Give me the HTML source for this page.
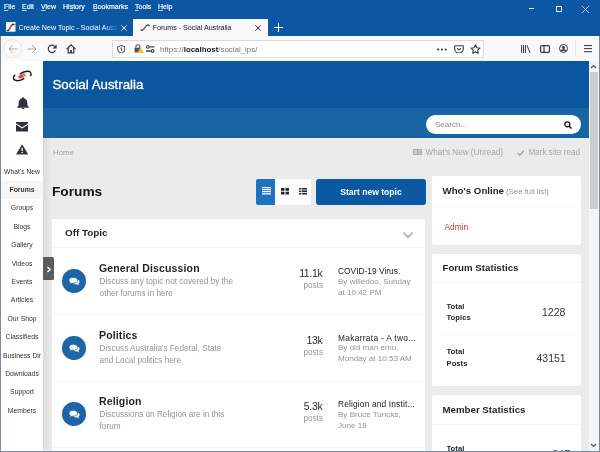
<!DOCTYPE html>
<html><head><meta charset="utf-8">
<style>
*{margin:0;padding:0;box-sizing:border-box}
html,body{width:600px;height:452px;overflow:hidden;background:#7a8a99;font-family:"Liberation Sans",sans-serif}
.a{position:absolute;white-space:nowrap}
.m{color:#fff;font-size:7px;top:2.5px;-webkit-text-stroke:0.15px #fff}
.m u{text-decoration-thickness:0.6px;text-underline-offset:1px;text-decoration-color:rgba(255,255,255,0.75)}
.tabtxt{font-size:7.1px;color:#fff}
#titlebar{position:absolute;left:0;top:0;width:600px;height:36px;background:#0b57a4}
#toolbar{position:absolute;left:1px;top:36px;width:598px;height:25px;background:#f9f9fb}
#url{position:absolute;left:112px;top:40px;width:372px;height:17.5px;background:#fff;border:1px solid #dcdcde;border-radius:1px}
#page{position:absolute;left:1px;top:61px;width:598px;height:390px;background:#ebebeb;overflow:hidden}
#side{position:absolute;left:0;top:0;width:42px;height:390px;background:#fff}
.sl{position:absolute;left:0;width:42px;text-align:center;font-size:6.8px;color:#333}
#hdr{position:absolute;left:42px;top:0;width:546px;height:47px;background:#0b579f}
#nav{position:absolute;left:42px;top:47px;width:546px;height:30px;background:#1765a3}
#scroll{position:absolute;left:588px;top:0;width:10px;height:390px;background:#f4f4f4}
.card{position:absolute;background:#fff;border-radius:2px}
.sep{position:absolute;height:1px;background:#f4f4f5}
.ft{font-size:10.5px;font-weight:bold;color:#1f2125;letter-spacing:0.15px}
.fd{font-size:8.2px;color:#8f949b;line-height:12.2px}
.num{font-size:10.5px;color:#2b2d30;text-align:right;letter-spacing:-0.35px}
.posts{font-size:8.2px;color:#8f949b;text-align:right}
.lt{font-size:8.4px;color:#222}
.lb{font-size:8.05px;color:#8f949b;line-height:11.3px}
.wt{font-size:10px;font-weight:bold;color:#1f2125}
</style></head><body><div style="position:absolute;left:0;top:0;width:600px;height:452px;will-change:transform">
<div id="titlebar"></div>
<div class="a m" style="left:4px"><u>F</u>ile</div>
<div class="a m" style="left:22px"><u>E</u>dit</div>
<div class="a m" style="left:41px"><u>V</u>iew</div>
<div class="a m" style="left:63px">Hi<u>s</u>tory</div>
<div class="a m" style="left:93px"><u>B</u>ookmarks</div>
<div class="a m" style="left:135px"><u>T</u>ools</div>
<div class="a m" style="left:158px"><u>H</u>elp</div>
<!-- tabs -->
<svg class="a" style="left:6px;top:22.3px" width="9.5" height="9.7" viewBox="0 0 9.5 9.7"><rect width="9.5" height="9.7" fill="#f4f8fb"/><path d="M1 8.3C2.3 9 3.3 7.8 4.3 5.6C5.3 3.4 6.6 1.6 8.6 2.6" stroke="#5a3328" stroke-width="1.5" fill="none"/><path d="M3.2 7.4C3.8 6.5 4.5 4.6 5.5 3.4" stroke="#d07a68" stroke-width="1.2" fill="none"/></svg>
<div class="a tabtxt" style="left:18.6px;top:23.5px;width:99px;overflow:hidden;-webkit-mask-image:linear-gradient(90deg,#000 85%,transparent)">Create New Topic - Social Australia</div>
<svg class="a" style="left:121px;top:24.5px" width="6" height="6" viewBox="0 0 6 6"><path d="M0.3 0.3L5.7 5.7M5.7 0.3L0.3 5.7" stroke="#fff" stroke-width="0.85"/></svg>
<div class="a" style="left:133px;top:19px;width:135px;height:18px;background:#f9f9fb"></div>
<svg class="a" style="left:140px;top:24px" width="10" height="7" viewBox="0 0 10 7"><path d="M0.6 5.6C1.6 6.8 3 6.3 4.3 4.3C5.6 2.3 7 0.2 8.4 1C9 1.3 9.3 1.8 9.5 2.2" stroke="#4a3028" stroke-width="1.3" fill="none"/><path d="M3 5.6C3.8 4.8 4.8 3 6 1.8" stroke="#c98070" stroke-width="1" fill="none"/></svg>
<div class="a tabtxt" style="left:152.7px;top:23.5px;color:#15141a">Forums - Social Australia</div>
<svg class="a" style="left:255px;top:25px" width="6" height="6" viewBox="0 0 6 6"><path d="M0.3 0.3L5.7 5.7M5.7 0.3L0.3 5.7" stroke="#15141a" stroke-width="0.85"/></svg>
<svg class="a" style="left:274px;top:23px" width="9" height="9" viewBox="0 0 9 9"><path d="M4.5 0V9M0 4.5H9" stroke="#fff" stroke-width="1.1"/></svg>
<!-- window controls -->
<div class="a" style="left:528.5px;top:8.2px;width:5.5px;height:0.8px;background:#dfe8f2"></div>
<div class="a" style="left:555.5px;top:6px;width:6.3px;height:6.3px;border:0.8px solid #e3ebf4"></div>
<svg class="a" style="left:582px;top:5.5px" width="7" height="7" viewBox="0 0 7 7"><path d="M0 0L7 7M7 0L0 7" stroke="#e3ebf4" stroke-width="0.75"/></svg>

<div id="toolbar"></div>
<!-- nav buttons -->
<div class="a" style="left:3px;top:39px;width:19px;height:19px;border-radius:50%;background:#fcfcfd;border:1px solid #e6e6e8"></div>
<svg class="a" style="left:7.5px;top:44px" width="10" height="10" viewBox="0 0 10 10"><path d="M9.5 5H1M4.8 1.2L1 5L4.8 8.8" stroke="#9d9da2" stroke-width="0.9" fill="none"/></svg>
<svg class="a" style="left:27px;top:44px" width="10" height="10" viewBox="0 0 10 10"><path d="M0.5 5H9M5.2 1.2L9 5L5.2 8.8" stroke="#9d9da2" stroke-width="0.9" fill="none"/></svg>
<svg class="a" style="left:46.5px;top:44px" width="10" height="9.5" viewBox="0 0 10 9.5"><path d="M7.9 2.6A3.7 3.7 0 1 0 8.4 6.2" stroke="#3b3b40" stroke-width="1.15" fill="none"/><path d="M9.6 0.4V4.6H5.4Z" fill="#3b3b40"/></svg>
<svg class="a" style="left:65.5px;top:44px" width="10" height="9.5" viewBox="0 0 10 9.5"><path d="M0.5 5.2L5 0.9L9.5 5.2" stroke="#3b3b40" stroke-width="1.2" fill="none"/><path d="M2.2 4V8.9H7.8V4" stroke="#3b3b40" stroke-width="1.2" fill="none"/><rect x="4.1" y="6" width="1.8" height="3" fill="#3b3b40"/></svg>
<div id="url"></div>
<svg class="a" style="left:116.5px;top:44.5px" width="8.5" height="8.7" viewBox="0 0 8.5 8.7"><path d="M4.25 0.6L7.8 1.8V4.3C7.8 6.2 6.4 7.5 4.25 8.2C2.1 7.5 0.7 6.2 0.7 4.3V1.8Z" stroke="#505055" stroke-width="1.1" fill="none"/><path d="M3.5 3.2L4.4 2.8V6" stroke="#505055" stroke-width="1" fill="none"/></svg>
<div class="a" style="left:129px;top:42px;width:1px;height:13px;background:#ececee"></div>
<svg class="a" style="left:133.5px;top:44.3px" width="10" height="9.2" viewBox="0 0 10 9.2"><path d="M1.9 4V2.6A1.9 1.9 0 0 1 5.7 2.6V4" stroke="#505055" stroke-width="1.1" fill="none"/><rect x="0.6" y="3.8" width="6.2" height="4.6" rx="0.5" fill="#4d534e"/><path d="M6.6 3.2L9.9 9H3.3Z" fill="#f0bd2e"/></svg>
<svg class="a" style="left:146px;top:45px" width="8.5" height="8" viewBox="0 0 8.5 8"><circle cx="1.9" cy="1.9" r="1.35" stroke="#45454a" stroke-width="1.1" fill="none"/><path d="M3.4 1.9H8.5M0 6H5" stroke="#45454a" stroke-width="1.3"/><circle cx="6.6" cy="6" r="1.35" stroke="#45454a" stroke-width="1.1" fill="none"/></svg>
<div class="a" style="left:160px;top:44.6px;font-size:7.9px;color:#737378">https://<span style="color:#15141a;font-weight:bold">localhost</span>/social_ips/</div>
<svg class="a" style="left:437px;top:48px" width="10" height="3" viewBox="0 0 10 3"><circle cx="1.2" cy="1.5" r="1.1" fill="#3a3a3e"/><circle cx="5" cy="1.5" r="1.1" fill="#3a3a3e"/><circle cx="8.8" cy="1.5" r="1.1" fill="#3a3a3e"/></svg>
<svg class="a" style="left:454px;top:44.5px" width="10" height="8.5" viewBox="0 0 10 8.5"><path d="M1.2 0.8H8.8Q9.3 0.8 9.3 1.3V3.8A4.3 4.3 0 0 1 0.7 3.8V1.3Q0.7 0.8 1.2 0.8Z" stroke="#3b3b40" stroke-width="1.1" fill="none"/><path d="M3 3.2L5 5.1L7 3.2" stroke="#3b3b40" stroke-width="1.1" fill="none"/></svg>
<svg class="a" style="left:470px;top:44px" width="11" height="10" viewBox="0 0 11 10"><path d="M5.5 0.8L6.9 3.7L10 4.1L7.7 6.2L8.3 9.3L5.5 7.8L2.7 9.3L3.3 6.2L1 4.1L4.1 3.7Z" stroke="#3a3a3e" stroke-width="1.1" fill="none" stroke-linejoin="round"/></svg>
<svg class="a" style="left:521px;top:45px" width="10" height="8" viewBox="0 0 10 8"><path d="M0.6 0V8M2.5 0V8M4.4 0V8M5.9 0.3L9 7.8" stroke="#3b3b40" stroke-width="1"/></svg>
<svg class="a" style="left:540px;top:45px" width="10" height="8" viewBox="0 0 10 8"><rect x="0.6" y="0.6" width="8.8" height="6.8" rx="1" stroke="#3a3a3e" stroke-width="1.2" fill="none"/><path d="M4 1V7" stroke="#3a3a3e" stroke-width="1.2"/></svg>
<svg class="a" style="left:559px;top:44px" width="9" height="9" viewBox="0 0 9 9"><circle cx="4.5" cy="4.5" r="4" stroke="#3a3a3e" stroke-width="1" fill="none"/><circle cx="4.5" cy="3.5" r="1.5" fill="#3a3a3e"/><path d="M2 7C3 5.5 6 5.5 7 7" stroke="#3a3a3e" stroke-width="1.5"/></svg>
<div class="a" style="left:575px;top:40px;width:1px;height:17px;background:#e8e8ea"></div>
<svg class="a" style="left:584px;top:45px" width="8" height="7.5" viewBox="0 0 8 7.5"><path d="M0 0.6H8M0 3.6H8M0 6.7H8" stroke="#2b2b30" stroke-width="0.95"/></svg>

<div id="page">
  <div id="side">
    <svg class="a" style="left:7px;top:4px" width="28" height="22" viewBox="0 0 28 22"><ellipse cx="13.8" cy="11.1" rx="4.1" ry="2.1" transform="rotate(-25 13.8 11.1)" fill="#e8755e"/><ellipse cx="13" cy="11.6" rx="1.8" ry="1" transform="rotate(-25 13 11.6)" fill="#b83428"/><path d="M7.3 9.9C5.1 11.1 4.4 14 7.4 15.3C10 16.3 13.5 15.2 16.3 13.4" stroke="#1b1b1b" stroke-width="1.45" fill="none"/><path d="M11.8 9C14.5 7.1 18 5.9 20.5 6.3C23.1 6.7 23.6 9.1 22.5 11.3" stroke="#1b1b1b" stroke-width="1.45" fill="none"/></svg>
    <svg class="a" style="left:15.5px;top:35.5px" width="12" height="12" viewBox="0 0 12 12"><path d="M6 0.3C6.6 0.3 7 0.7 7 1.3C9.3 1.8 10.4 3.7 10.4 6.3V8.4L11.8 10V10.7H0.2V10L1.6 8.4V6.3C1.6 3.7 2.7 1.8 5 1.3C5 0.7 5.4 0.3 6 0.3Z" fill="#2e323a"/><path d="M4.6 10.9A1.4 1.3 0 0 0 7.4 10.9Z" fill="#2e323a"/></svg>
    <svg class="a" style="left:15px;top:61px" width="12.3" height="9.5" viewBox="0 0 12.3 9.5"><path d="M0 0H12.3V1.2L6.15 5.2L0 1.2Z" fill="#2e323a"/><path d="M0 2.6L6.15 6.5L12.3 2.6V9.5H0Z" fill="#2e323a"/></svg>
    <svg class="a" style="left:15px;top:83px" width="12.3" height="10.5" viewBox="0 0 12.3 10.5"><path d="M6.15 0.2L12.3 10.5H0Z" fill="#2e323a"/><path d="M6.15 3.8V7" stroke="#fff" stroke-width="1.3"/><circle cx="6.15" cy="8.6" r="0.75" fill="#fff"/></svg>
    <div class="sl" style="top:106.5px">What's New</div>
    <div class="a" style="left:0;top:119.5px;width:42px;height:18.7px;background:#f6f6f6"></div>
    <div class="sl" style="top:124.9px;font-weight:bold">Forums</div>
    <div class="sl" style="top:143.3px">Groups</div>
    <div class="sl" style="top:161.7px">Blogs</div>
    <div class="sl" style="top:180.1px">Gallery</div>
    <div class="sl" style="top:198.5px">Videos</div>
    <div class="sl" style="top:216.9px">Events</div>
    <div class="sl" style="top:235.3px">Articles</div>
    <div class="sl" style="top:253.7px">Our Shop</div>
    <div class="sl" style="top:272.1px">Classifieds</div>
    <div class="sl" style="top:290.5px">Business Dir</div>
    <div class="sl" style="top:308.9px">Downloads</div>
    <div class="sl" style="top:327.3px">Support</div>
    <div class="sl" style="top:345.7px">Members</div>
  </div>
  <div class="a" style="left:42px;top:0;width:9px;height:388px;background:linear-gradient(90deg,#dadada,#e6e6e6 60%,#ebebeb)"></div>
  <div id="hdr"><div class="a" style="left:9.5px;top:16px;color:#fff;font-size:13.3px;-webkit-text-stroke:0.3px #fff">Social Australia</div></div>
  <div id="nav">
    <div class="a" style="left:383px;top:7px;width:155px;height:19px;background:#fff;border-radius:10px"></div>
    <div class="a" style="left:392px;top:12px;font-size:8px;color:#8a8a8a">Search...</div>
    <svg class="a" style="left:521px;top:13px" width="8" height="8" viewBox="0 0 8 8"><circle cx="3.3" cy="3.3" r="2.5" stroke="#111" stroke-width="1.3" fill="none"/><path d="M5.2 5.2L7.5 7.5" stroke="#111" stroke-width="1.5"/></svg>
  </div>
  <div id="scroll">
    <svg class="a" style="left:1px;top:3px" width="7" height="5" viewBox="0 0 7 5"><path d="M1 4L3.5 1.5L6 4" stroke="#505050" stroke-width="1.1" fill="none"/></svg>
    <div class="a" style="left:1px;top:11px;width:8px;height:136.5px;background:#cdcdcd"></div>
    <svg class="a" style="left:1px;top:382px" width="7" height="5" viewBox="0 0 7 5"><path d="M1 1L3.5 3.5L6 1" stroke="#505050" stroke-width="1.1" fill="none"/></svg>
  </div>
  <div class="a" style="left:52px;top:87px;font-size:7.8px;color:#9ea2a7">Home</div>
  <svg class="a" style="left:411.5px;top:88px" width="9.5" height="6" viewBox="0 0 9.5 6"><rect x="0" y="0" width="9.5" height="6" fill="#ababab"/><rect x="1.2" y="1.2" width="3" height="3.6" fill="#d8d8d8"/><path d="M5.3 1.6H8.5M5.3 3H8.5M5.3 4.4H8.5" stroke="#dadada" stroke-width="0.7"/></svg>
  <div class="a" style="left:424.5px;top:86.8px;font-size:8.15px;color:#a3a7ac">What's New (Unread)</div>
  <svg class="a" style="left:516px;top:88.5px" width="7.5" height="6" viewBox="0 0 7.5 6"><path d="M0.7 3L2.8 5L6.9 0.8" stroke="#a6a6a6" stroke-width="1.5" fill="none"/></svg>
  <div class="a" style="left:527.5px;top:86.8px;font-size:8.15px;color:#a3a7ac">Mark site read</div>

  <div class="a" style="left:51px;top:123px;font-size:13.7px;font-weight:bold;color:#111">Forums</div>
  <!-- view buttons -->
  <div class="a" style="left:255px;top:118px;width:55px;height:26px;background:#fff;border-radius:2px"></div>
  <div class="a" style="left:255px;top:118px;width:19px;height:26px;background:#1e73c0;border-radius:2px 0 0 2px"></div>
  <svg class="a" style="left:260.5px;top:126px" width="9" height="8.4" viewBox="0 0 9 8.4"><path d="M0 0.7H9M0 2.7H9M0 4.7H9M0 6.9H9" stroke="#fff" stroke-width="1.2"/></svg>
  <svg class="a" style="left:279.5px;top:127px" width="8" height="6.5" viewBox="0 0 8 6.5"><rect x="0" y="0" width="3.5" height="2.8" fill="#1c2b3a"/><rect x="4.5" y="0" width="3.5" height="2.8" fill="#1c2b3a"/><rect x="0" y="3.7" width="3.5" height="2.8" fill="#1c2b3a"/><rect x="4.5" y="3.7" width="3.5" height="2.8" fill="#1c2b3a"/></svg>
  <svg class="a" style="left:298px;top:127px" width="8" height="6.5" viewBox="0 0 8 6.5"><rect x="0" y="0" width="1.8" height="1.6" fill="#1c2b3a"/><rect x="2.6" y="0" width="5.4" height="1.6" fill="#1c2b3a"/><rect x="0" y="2.45" width="1.8" height="1.6" fill="#1c2b3a"/><rect x="2.6" y="2.45" width="5.4" height="1.6" fill="#1c2b3a"/><rect x="0" y="4.9" width="1.8" height="1.6" fill="#1c2b3a"/><rect x="2.6" y="4.9" width="5.4" height="1.6" fill="#1c2b3a"/></svg>
  <div class="a" style="left:315px;top:118px;width:110px;height:26px;background:#0c58a3;border-radius:3px;color:#fff;font-size:8.6px;font-weight:bold;text-align:center;line-height:26.6px">Start new topic</div>

  <!-- main card -->
  <div class="card" style="left:51px;top:158px;width:373.4px;height:400px"></div>
  <div class="a wt" style="left:64px;top:166.3px;font-size:9.9px">Off Topic</div>
  <svg class="a" style="left:401px;top:170px" width="12" height="8" viewBox="0 0 12 8"><path d="M1.4 1.6L6 6L10.6 1.6" stroke="#b8b8b8" stroke-width="2" fill="none"/></svg>
  <div class="sep" style="left:51px;top:186px;width:373.4px"></div>
  <div class="sep" style="left:51px;top:253px;width:373.4px"></div>
  <div class="sep" style="left:51px;top:319.6px;width:373.4px"></div>
  <div class="sep" style="left:51px;top:386px;width:373.4px"></div>

  <!-- row 1 -->
  <div class="a" style="left:61.2px;top:208.2px;width:23.5px;height:23.5px;border-radius:50%;background:#1d64a8"></div><svg class="a" style="left:68px;top:215.5px" width="11" height="9" viewBox="0 0 11 9"><path d="M7 2.2C9 2.2 10.6 3.3 10.6 4.8C10.6 5.6 10.1 6.3 9.4 6.7L10.2 8.4L7.9 7.3C7.6 7.4 7.3 7.4 7 7.4C5 7.4 3.4 6.3 3.4 4.8Z" fill="#fff"/><path d="M4.3 0.3C6.7 0.3 8.6 1.6 8.6 3.3C8.6 5 6.7 6.3 4.3 6.3C3.9 6.3 3.5 6.3 3.1 6.2L0.5 7.5L1.3 5.4C0.5 4.9 0 4.1 0 3.3C0 1.6 1.9 0.3 4.3 0.3Z" fill="#fff" stroke="#1d64a8" stroke-width="0.8"/></svg>
  <div class="a" style="left:98px;top:197px" ><span class="ft">General Discussion</span></div>
  <div class="a fd" style="left:98.6px;top:214.7px">Discuss any topic not covered by the<br>other forums in here</div>
  <div class="a num" style="left:271.3px;top:206px;width:50px">11.1k</div>
  <div class="a posts" style="left:272px;top:220px;width:50px">posts</div>
  <div class="a lt" style="left:337px;top:205px">COVID-19 Virus.</div>
  <div class="a lb" style="left:337px;top:215px">By willedoo, Sunday<br>at 10:42 PM</div>
  <!-- row 2 -->
  <div class="a" style="left:61.2px;top:275.2px;width:23.5px;height:23.5px;border-radius:50%;background:#1d64a8"></div><svg class="a" style="left:68px;top:282.5px" width="11" height="9" viewBox="0 0 11 9"><path d="M7 2.2C9 2.2 10.6 3.3 10.6 4.8C10.6 5.6 10.1 6.3 9.4 6.7L10.2 8.4L7.9 7.3C7.6 7.4 7.3 7.4 7 7.4C5 7.4 3.4 6.3 3.4 4.8Z" fill="#fff"/><path d="M4.3 0.3C6.7 0.3 8.6 1.6 8.6 3.3C8.6 5 6.7 6.3 4.3 6.3C3.9 6.3 3.5 6.3 3.1 6.2L0.5 7.5L1.3 5.4C0.5 4.9 0 4.1 0 3.3C0 1.6 1.9 0.3 4.3 0.3Z" fill="#fff" stroke="#1d64a8" stroke-width="0.8"/></svg>
  <div class="a" style="left:98px;top:264px" ><span class="ft">Politics</span></div>
  <div class="a fd" style="left:98.6px;top:281.9px">Discuss Australia's Federal, State<br>and Local politics here</div>
  <div class="a num" style="left:271.3px;top:273px;width:50px">13k</div>
  <div class="a posts" style="left:272px;top:287px;width:50px">posts</div>
  <div class="a lt" style="left:337px;top:272px;letter-spacing:0.3px">Makarrata - A two...</div>
  <div class="a lb" style="left:337px;top:281px">By old man emu,<br>Monday at 10:53 AM</div>
  <!-- row 3 -->
  <div class="a" style="left:61.2px;top:341.2px;width:23.5px;height:23.5px;border-radius:50%;background:#1d64a8"></div><svg class="a" style="left:68px;top:348.5px" width="11" height="9" viewBox="0 0 11 9"><path d="M7 2.2C9 2.2 10.6 3.3 10.6 4.8C10.6 5.6 10.1 6.3 9.4 6.7L10.2 8.4L7.9 7.3C7.6 7.4 7.3 7.4 7 7.4C5 7.4 3.4 6.3 3.4 4.8Z" fill="#fff"/><path d="M4.3 0.3C6.7 0.3 8.6 1.6 8.6 3.3C8.6 5 6.7 6.3 4.3 6.3C3.9 6.3 3.5 6.3 3.1 6.2L0.5 7.5L1.3 5.4C0.5 4.9 0 4.1 0 3.3C0 1.6 1.9 0.3 4.3 0.3Z" fill="#fff" stroke="#1d64a8" stroke-width="0.8"/></svg>
  <div class="a" style="left:98px;top:330px" ><span class="ft">Religion</span></div>
  <div class="a fd" style="left:98.6px;top:348.2px">Discussions on Religion are in this<br>forum</div>
  <div class="a num" style="left:271.3px;top:339px;width:50px">5.3k</div>
  <div class="a posts" style="left:272px;top:353px;width:50px">posts</div>
  <div class="a lt" style="left:337px;top:338px;letter-spacing:0.15px">Religion and Instit...</div>
  <div class="a lb" style="left:337px;top:348px">By Bruce Tuncks,<br>June 18</div>

  <!-- right cards -->
  <div class="card" style="left:431px;top:115px;width:149px;height:69px"></div>
  <div class="a wt" style="left:441.5px;top:123.5px;font-size:9.7px">Who's Online<span style="font-size:7.8px;margin-left:2px;color:#8f949b;font-weight:normal">(See full list)</span></div>
  <div class="sep" style="left:431px;top:145px;width:149px"></div>
  <div class="a" style="left:443.5px;top:161px;font-size:8.3px;color:#c8303a">Admin</div>

  <div class="card" style="left:431px;top:193px;width:149px;height:132px"></div>
  <div class="a wt" style="left:441.5px;top:200.5px;font-size:9.7px">Forum Statistics</div>
  <div class="sep" style="left:431px;top:221px;width:149px"></div>
  <div class="a" style="left:445.5px;top:239.8px;font-size:7.7px;font-weight:bold;color:#26282c;line-height:11.5px">Total<br>Topics</div>
  <div class="a" style="left:541px;top:245.2px;font-size:10.5px;color:#333">1228</div>
  <div class="sep" style="left:439px;top:273px;width:134px"></div>
  <div class="a" style="left:445.5px;top:285.2px;font-size:7.7px;font-weight:bold;color:#26282c;line-height:11.5px">Total<br>Posts</div>
  <div class="a" style="left:535.5px;top:290.5px;font-size:10.5px;color:#333">43151</div>

  <div class="card" style="left:431px;top:334px;width:149px;height:80px"></div>
  <div class="a wt" style="left:441.5px;top:342.5px;font-size:9.7px">Member Statistics</div>
  <div class="sep" style="left:431px;top:363px;width:149px"></div>
  <div class="a" style="left:445.5px;top:382.5px;font-size:7.7px;font-weight:bold;color:#26282c">Total</div>
  <div class="a" style="left:551.5px;top:386.5px;font-size:10.5px;color:#333">847</div>
</div>
<!-- toggle -->
<div class="a" style="left:43px;top:256.6px;width:10.8px;height:23.4px;background:#5c5c5c;border-radius:0 1.5px 1.5px 0"></div>
<svg class="a" style="left:46px;top:265.5px" width="6" height="7" viewBox="0 0 6 7"><path d="M1.4 0.9L4.2 3.5L1.4 6.1" stroke="#fff" stroke-width="1.3" fill="none"/></svg>
</div></body></html>
